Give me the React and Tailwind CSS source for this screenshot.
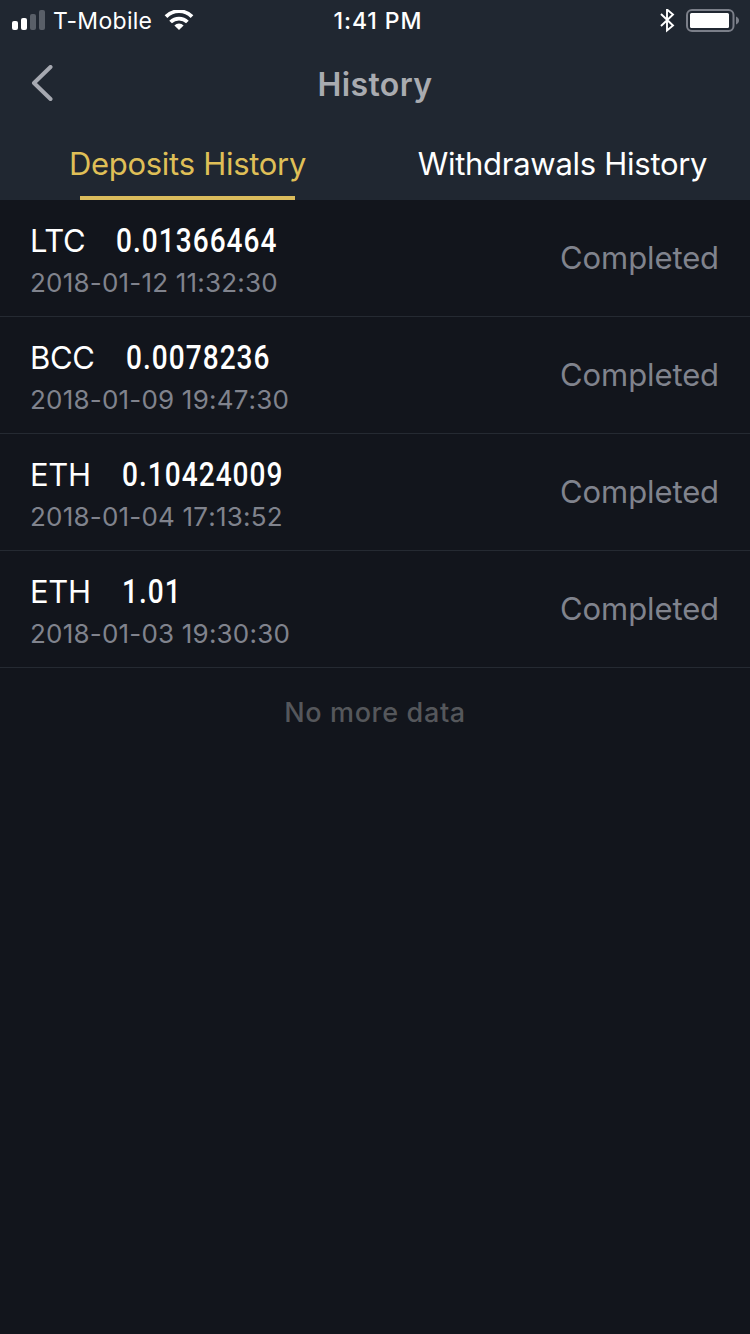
import React from 'react';

const deposits = [
  { coin: 'LTC', amount: '0.01366464', date: '2018-01-12 11:32:30', status: 'Completed' },
  { coin: 'BCC', amount: '0.0078236', date: '2018-01-09 19:47:30', status: 'Completed' },
  { coin: 'ETH', amount: '0.10424009', date: '2018-01-04 17:13:52', status: 'Completed' },
  { coin: 'ETH', amount: '1.01', date: '2018-01-03 19:30:30', status: 'Completed' },
];

function StatusBar() {
  return (
    <div className="grid h-10 grid-cols-3 items-center pl-3 pr-[10px] text-[23px] leading-[42px] text-white">
      <div className="flex items-center">
        <svg width="34" height="22" viewBox="0 0 34 22" aria-hidden="true">
          <rect x="0" y="11" width="6" height="9" rx="2" fill="#fff" />
          <rect x="9" y="8" width="6" height="12" rx="2" fill="#fff" />
          <rect x="18" y="4" width="6" height="16" rx="2" fill="#595f68" />
          <rect x="27" y="0" width="6" height="20" rx="2" fill="#595f68" />
        </svg>
        <span className="ml-[7px] tracking-[0.3px]">T-Mobile</span>
        <svg className="ml-3" width="30" height="22" viewBox="0 0 30 22" aria-hidden="true">
          <g fill="none" stroke="#fff" strokeWidth="3.8">
            <path d="M2 6.600a18.400 18.400 0 0 1 26 0" />
            <path d="M6.600 12a11.900 11.900 0 0 1 16.800 0" />
          </g>
          <path d="M15 20l-4.600-4.600a6.600 6.600 0 0 1 9.200 0z" fill="#fff" />
        </svg>
      </div>
      <div className="pl-[4px] text-center font-medium tracking-[0.9px]">1:41 PM</div>
      <div className="flex items-center justify-end gap-[11px]">
        <svg width="16" height="24" viewBox="0 0 16 24" fill="none" stroke="#fff" strokeWidth="1.9" aria-hidden="true">
          <path d="M2 5l12 11.500-6 5V.5l6 5L2 17" />
        </svg>
        <svg width="54" height="24" viewBox="0 0 54 24" aria-hidden="true">
          <rect x="1" y="1" width="46.5" height="21" rx="5" fill="none" stroke="#7b7f89" strokeWidth="2" />
          <rect x="4" y="4" width="39" height="15" rx="1.5" fill="#fff" />
          <path d="M50 7.500c2 .8 3 2.300 3 4s-1 3.200-3 4z" fill="#7b7f89" />
        </svg>
      </div>
    </div>
  );
}

function Header() {
  return (
    <header className="h-[200px] bg-[#202731]">
      <StatusBar />
      <div className="grid h-[88px] grid-cols-[1fr_auto_1fr] items-center">
        <button className="pl-[31px]" aria-label="Back">
          <svg width="22" height="38" viewBox="0 0 22 38" fill="none" stroke="#a6a9b1" strokeWidth="4" strokeLinecap="round" strokeLinejoin="round">
            <path d="M19.500 2L3 18l16.500 16" />
          </svg>
        </button>
        <h1 className="pt-[2px] text-[32px] font-semibold tracking-[0.4px] text-[#a9abb0]">History</h1>
      </div>
      <nav className="grid h-[72px] grid-cols-2 text-[31px] leading-[72px] tracking-[-0.28px]">
        <div className="flex flex-col items-center text-[#dfbf57]">
          <span className="h-[68px]">Deposits History</span>
          <span className="h-1 w-[215px] bg-[#dbbc5c]" />
        </div>
        <div className="text-center text-white">Withdrawals History</div>
      </nav>
    </header>
  );
}

function DepositRow({ coin, amount, date, status }) {
  return (
    <li className="flex h-[117px] items-center justify-between border-b border-[#252a32] pl-[30px] pr-[31px]">
      <div className="pt-2">
        <div className="flex items-baseline gap-[31px] leading-[42px] text-white">
          <span className="text-[31px] tracking-[-0.3px]">{coin}</span>
          {/* narrowed to get the condensed numerals */}
          <span className="origin-left scale-x-85 font-[Roboto] text-[33px] font-medium tracking-[1.2px]">
            {amount}
          </span>
        </div>
        <div className="text-[26px] leading-[42px] tracking-[0.2px] text-[#80838d] [font-kerning:none]">{date}</div>
      </div>
      <span className="text-[31px] tracking-[-0.1px] text-[#80838d]">{status}</span>
    </li>
  );
}

export default function App() {
  return (
    <div className="h-[1334px] w-[750px] overflow-hidden bg-[#12151c] font-[Inter,sans-serif]">
      <Header />
      <ul>
        {deposits.map((item) => (
          <DepositRow key={item.date} {...item} />
        ))}
      </ul>
      <p className="pt-6 text-center text-[27px] font-medium leading-[42px] tracking-[0.65px] text-[#55575b]">
        No more data
      </p>
    </div>
  );
}
